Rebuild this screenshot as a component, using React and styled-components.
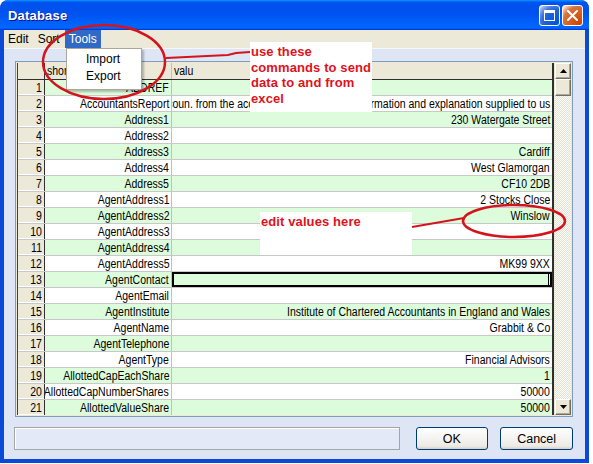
import React from "react";
import styled, { createGlobalStyle } from "styled-components";

const Global = createGlobalStyle`
  html, body { margin: 0; padding: 0; background: #ffffff; }
  body { font-family: "Liberation Sans", Arial, sans-serif; }
  * { box-sizing: border-box; }
`;

const GRID_FONT = `"Liberation Sans", Arial, sans-serif`;

const Window = styled.div`
  position: relative;
  width: 589px;
  height: 463px;
  display: flex;
  flex-direction: column;
  background: #0b4ad8;
  border-radius: 8px 8px 0 0;
  padding: 0 4px 4px 4px;
  overflow: hidden;
`;

const TitleBar = styled.div`
  height: 30px;
  margin: 0 -4px;
  padding: 0 6px 0 8px;
  display: flex;
  align-items: center;
  justify-content: space-between;
  background: linear-gradient(180deg, #0997ff, #0053ee 8%, #0050ee 40%, #0066ff 88%, #0066ff 93%, #005bff 95%, #003dd7 96%, #003dd7);
  border-radius: 8px 8px 0 0;
`;

const Title = styled.div`
  color: #fff;
  font: bold 13px "Liberation Sans", Arial, sans-serif;
  letter-spacing: 0.2px;
  text-shadow: 1px 1px #0f1089;
`;

const TitleButtons = styled.div`
  display: flex;
  gap: 2px;
  margin-top: 1px;
`;

const TBtn = styled.div`
  width: 21px;
  height: 21px;
  border: 1px solid #fff;
  border-radius: 3px;
  display: flex;
  align-items: center;
  justify-content: center;
  background: ${(p) =>
    p.$close
      ? "radial-gradient(circle at 90% 90%, #cc4600 0%, #dc6527 55%, #cd7546 70%, #ffccb2 90%, #fff 100%)"
      : "radial-gradient(circle at 90% 90%, #0054e9 0%, #2263d5 55%, #4479e4 70%, #a3bbec 90%, #fff 100%)"};
`;

const MenuBar = styled.div`
  height: 18px;
  background: #ece9d8;
  display: flex;
  align-items: stretch;
`;

const MenuItem = styled.div`
  padding: 0 5px 0 4px;
  display: flex;
  align-items: center;
  font: 12px "Liberation Sans", Arial, sans-serif;
  color: ${(p) => (p.$active ? "#fff" : "#000")};
  background: ${(p) => (p.$active ? "#316ac5" : "transparent")};
  width: ${(p) => (p.$w ? `${p.$w}px` : "auto")};
`;

const Body = styled.div`
  flex: 1;
  background: #dee6f5;
  border-top: 1px solid #f4f7fc;
  display: flex;
  flex-direction: column;
  padding: 12px 12px 9px 11px;
  gap: 10px;
`;

const GridFrame = styled.div`
  height: 356px;
  display: flex;
  border: 1px solid #7f9db9;
  background: #ece9d8;
  padding: 1px;
`;

const Table = styled.div`
  width: 537px;
  display: flex;
  flex-direction: column;
  overflow: hidden;
  background: #fff;
  border-left: 1px solid #404040;
  border-right: 2px solid #303030;
`;

const Row = styled.div`
  flex: 0 0 ${(p) => (p.$header ? 17 : 16)}px;
  display: grid;
  grid-template-columns: 27px 127px 1fr;
  font: 12.5px ${GRID_FONT};
  color: #000;
  border-bottom: 1px solid ${(p) => (p.$header ? "#303030" : "#c8c8c8")};
  background: ${(p) => (p.$header ? "#ece9d8" : p.$odd ? "#dcfcdc" : "#ffffff")};
`;

const NumCell = styled.div`
  background: #ece9d8;
  border-right: 1px solid #303030;
  display: flex;
  align-items: center;
  justify-content: flex-end;
  padding-right: 2px;
  box-shadow: ${(p) => (p.$header ? "none" : "inset 0 -1px 0 #fff")};
`;

const Cell = styled.div`
  position: relative;
  display: flex;
  align-items: center;
  justify-content: ${(p) => (p.$left ? "flex-start" : "flex-end")};
  overflow: hidden;
  white-space: nowrap;
  padding: 0 2px;
  border-right: ${(p) => (p.$divider ? "1px solid #c0c0c0" : "none")};
  box-shadow: ${(p) => (p.$active ? "inset 0 0 0 2px #000" : "none")};
`;

const Txt = styled.span`
  flex: 0 0 auto;
  display: inline-block;
  transform: scaleX(0.84);
  transform-origin: ${(p) => (p.$left ? "left" : "right")} center;
`;

const Caret = styled.i`
  position: absolute;
  right: 3px;
  top: 2px;
  width: 1px;
  height: 12px;
  background: #000;
`;

const ScrollBar = styled.div`
  width: 16px;
  margin-left: 1px;
  display: flex;
  flex-direction: column;
  background-color: #f4f3ee;
  background-image: repeating-conic-gradient(#e4e1d2 0% 25%, #fbfbf8 0% 50%);
  background-size: 2px 2px;
`;

const SBtn = styled.div`
  flex: 0 0 ${(p) => p.$h || 16}px;
  background: #ece9d8;
  border: 1px solid;
  border-color: #fff #716f64 #716f64 #fff;
  box-shadow: inset -1px -1px 0 #aca899;
  display: flex;
  align-items: center;
  justify-content: center;
`;

const Spacer = styled.div`
  flex: 1;
`;

const Footer = styled.div`
  height: 23px;
  display: flex;
  align-items: center;
`;

const StatusBox = styled.div`
  width: 387px;
  height: 23px;
  margin-left: -1px;
  border: 1px solid #a5a5a5;
  box-shadow: inset 1px 1px 0 #fff;
  background: #e3e9f7;
`;

const Button = styled.button`
  width: 73px;
  height: 23px;
  margin-left: ${(p) => p.$ml}px;
  border: 1px solid #003c74;
  border-radius: 3px;
  background: linear-gradient(180deg, #fff, #ecebe6 86%, #d6d0c5);
  font: 12.5px ${GRID_FONT};
  color: #000;
  padding: 0;
`;

const Dropdown = styled.div`
  position: absolute;
  left: 66px;
  top: 48px;
  width: 76px;
  padding: 3px 0;
  background: #fff;
  border: 1px solid #aca899;
  box-shadow: 2px 2px 2px rgba(0, 0, 0, 0.25);
  display: flex;
  flex-direction: column;
`;

const DropItem = styled.div`
  height: 17px;
  line-height: 17px;
  padding-left: 19px;
  font: 12px "Liberation Sans", Arial, sans-serif;
  color: #000;
`;

const Overlay = styled.svg`
  position: absolute;
  left: 0;
  top: 0;
  pointer-events: none;
`;

const Note = styled.div`
  position: absolute;
  left: ${(p) => p.$x}px;
  top: ${(p) => p.$y}px;
  width: ${(p) => p.$w}px;
  height: ${(p) => p.$h}px;
  background: #fff;
  padding: 2px 0 0 1px;
  color: #e0121c;
  font: bold 13px "Liberation Sans", Arial, sans-serif;
  letter-spacing: 0.1px;
  line-height: 15.5px;
  white-space: nowrap;
`;

const rows = [
  ["ABDREF", ""],
  ["AccountantsReport", "We have received Accoun. from the accounts', and for all the information and explanation supplied to us"],
  ["Address1", "230 Watergate Street"],
  ["Address2", ""],
  ["Address3", "Cardiff"],
  ["Address4", "West Glamorgan"],
  ["Address5", "CF10 2DB"],
  ["AgentAddress1", "2 Stocks Close"],
  ["AgentAddress2", "Winslow"],
  ["AgentAddress3", ""],
  ["AgentAddress4", ""],
  ["AgentAddress5", "MK99 9XX"],
  ["AgentContact", ""],
  ["AgentEmail", ""],
  ["AgentInstitute", "Institute of Chartered Accountants in England and Wales"],
  ["AgentName", "Grabbit & Co"],
  ["AgentTelephone", ""],
  ["AgentType", "Financial Advisors"],
  ["AllottedCapEachShare", "1"],
  ["AllottedCapNumberShares", "50000"],
  ["AllottedValueShare", "50000"],
];

const Arrow = ({ down }) => (
  <svg width="7" height="4" viewBox="0 0 7 4">
    <path d={down ? "M0 0h7L3.5 4z" : "M0 4h7L3.5 0z"} fill="#000" />
  </svg>
);

export default function App() {
  return (
    <>
      <Global />
      <Window>
        <TitleBar>
          <Title>Database</Title>
          <TitleButtons>
            <TBtn>
              <svg width="11" height="11" viewBox="0 0 11 11">
                <rect x="0.5" y="0.5" width="10" height="10" fill="none" stroke="#fff" />
                <rect x="0" y="0" width="11" height="3" fill="#fff" />
              </svg>
            </TBtn>
            <TBtn $close>
              <svg width="11" height="11" viewBox="0 0 11 11">
                <path d="M1 1L10 10M10 1L1 10" stroke="#fff" strokeWidth="2" strokeLinecap="square" />
              </svg>
            </TBtn>
          </TitleButtons>
        </TitleBar>
        <MenuBar>
          <MenuItem>Edit</MenuItem>
          <MenuItem>Sort</MenuItem>
          <MenuItem $active $w={36}>Tools</MenuItem>
        </MenuBar>
        <Body>
          <GridFrame>
            <Table>
              <Row $header>
                <NumCell $header />
                <Cell $left $divider>
                  <Txt $left>short</Txt>
                </Cell>
                <Cell $left>
                  <Txt $left>valu</Txt>
                </Cell>
              </Row>
              {rows.map(([k, v], i) => (
                <Row key={k} $odd={i % 2 === 0}>
                  <NumCell>
                    <Txt>{i + 1}</Txt>
                  </NumCell>
                  <Cell $divider>
                    <Txt>{k}</Txt>
                  </Cell>
                  <Cell $active={i === 12}>
                    <Txt>{v}</Txt>
                    {i === 12 && <Caret />}
                  </Cell>
                </Row>
              ))}
            </Table>
            <ScrollBar>
              <SBtn>
                <Arrow />
              </SBtn>
              <SBtn $h={17} />
              <Spacer />
              <SBtn>
                <Arrow down />
              </SBtn>
            </ScrollBar>
          </GridFrame>
          <Footer>
            <StatusBox />
            <Button $ml={16}>OK</Button>
            <Button $ml={12}>Cancel</Button>
          </Footer>
        </Body>

        <Dropdown>
          <DropItem>Import</DropItem>
          <DropItem>Export</DropItem>
        </Dropdown>

        <Note $x={250} $y={42} $w={122} $h={70}>
          use these
          <br />
          commands to send
          <br />
          data to and from
          <br />
          excel
        </Note>
        <Note $x={260} $y={212} $w={152} $h={43}>
          edit values here
        </Note>

        <Overlay width="589" height="463" viewBox="0 0 589 463">
          <ellipse cx="104" cy="62" rx="61" ry="37" fill="none" stroke="#d4141c" strokeWidth="2.5" />
          <polyline points="166,58 228,55 236,53 250,52" fill="none" stroke="#d4141c" strokeWidth="2" />
          <ellipse cx="514" cy="221" rx="51" ry="16" fill="none" stroke="#d4141c" strokeWidth="2.5" />
          <line x1="412" y1="227" x2="464" y2="218" stroke="#d4141c" strokeWidth="2" />
        </Overlay>
      </Window>
    </>
  );
}
